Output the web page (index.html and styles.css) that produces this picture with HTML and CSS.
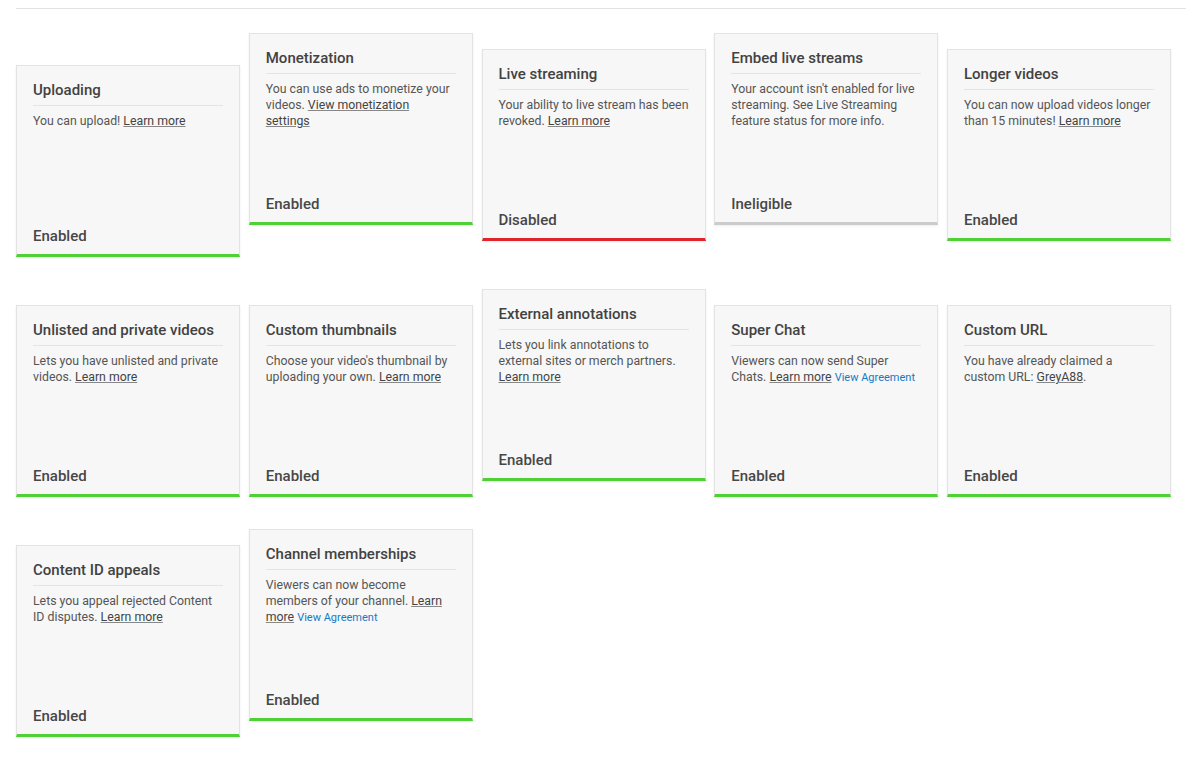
FILE: index.html
```html
<!DOCTYPE html>
<html lang="en">
<head>
<meta charset="utf-8">
<title>Channel features</title>
<link rel="stylesheet" href="styles.css">
</head>
<body>
<div class="page">
  <div class="rule"></div>
  <div class="features">
    <div class="card ok">
      <div class="title">Uploading</div>
      <div class="desc">You can upload! <a href="#">Learn more</a></div>
      <div class="status">Enabled</div>
    </div><div class="card ok">
      <div class="title">Monetization</div>
      <div class="desc">You can use ads to monetize your videos. <a href="#">View monetization settings</a></div>
      <div class="status">Enabled</div>
    </div><div class="card bad">
      <div class="title">Live streaming</div>
      <div class="desc">Your ability to live stream has been revoked. <a href="#">Learn more</a></div>
      <div class="status">Disabled</div>
    </div><div class="card na">
      <div class="title">Embed live streams</div>
      <div class="desc">Your account isn't enabled for live streaming. See Live Streaming feature status for more info.</div>
      <div class="status">Ineligible</div>
    </div><div class="card ok">
      <div class="title">Longer videos</div>
      <div class="desc">You can now upload videos longer than 15 minutes! <a href="#">Learn more</a></div>
      <div class="status">Enabled</div>
    </div><div class="card ok">
      <div class="title">Unlisted and private videos</div>
      <div class="desc">Lets you have unlisted and private videos. <a href="#">Learn more</a></div>
      <div class="status">Enabled</div>
    </div><div class="card ok">
      <div class="title">Custom thumbnails</div>
      <div class="desc">Choose your video's thumbnail by uploading your own. <a href="#">Learn more</a></div>
      <div class="status">Enabled</div>
    </div><div class="card ok">
      <div class="title">External annotations</div>
      <div class="desc">Lets you link annotations to external sites or merch partners. <a href="#">Learn more</a></div>
      <div class="status">Enabled</div>
    </div><div class="card ok">
      <div class="title">Super Chat</div>
      <div class="desc">Viewers can now send Super Chats. <a href="#">Learn more</a> <a class="agree" href="#">View Agreement</a></div>
      <div class="status">Enabled</div>
    </div><div class="card ok">
      <div class="title">Custom URL</div>
      <div class="desc">You have already claimed a custom URL: <a href="#">GreyA88</a>.</div>
      <div class="status">Enabled</div>
    </div><div class="card ok">
      <div class="title">Content ID appeals</div>
      <div class="desc">Lets you appeal rejected Content ID disputes. <a href="#">Learn more</a></div>
      <div class="status">Enabled</div>
    </div><div class="card ok">
      <div class="title">Channel memberships</div>
      <div class="desc">Viewers can now become members of your channel. <a href="#">Learn more</a> <a class="agree" href="#">View Agreement</a></div>
      <div class="status">Enabled</div>
    </div>
  </div>
</div>
</body>
</html>
```

FILE: styles.css
```css
html, body {
  margin: 0;
  padding: 0;
  background: #ffffff;
}

body {
  font-family: Roboto, "Liberation Sans", Arial, sans-serif;
  color: #333333;
}

.page {
  padding: 8px 14px 0 16px;
}

.rule {
  border-top: 1px solid #e2e2e2;
}

.features {
  padding-top: 8px;
  font-size: 0;
  line-height: 0;
}

.card {
  display: inline-block;
  vertical-align: baseline;
  position: relative;
  box-sizing: border-box;
  width: 224px;
  height: 192px;
  margin: 16px 8.75px 16px 0;
  padding: 15px 16px 0;
  background: #f7f7f7;
  border: 1px solid #e3e3e3;
  border-bottom: 3px solid #4fd136;
  box-shadow: 0 1px 2px rgba(0, 0, 0, 0.08);
  font-size: 12.3px;
  line-height: 16px;
  white-space: normal;
}

.card.bad {
  border-bottom-color: #e0242b;
}

.card.na {
  border-bottom-color: #cccccc;
}

.title {
  font-size: 15px;
  line-height: 18px;
  font-weight: 500;
  color: #424242;
  padding-bottom: 6px;
  border-bottom: 1px solid #e4e4e4;
  white-space: nowrap;
}

.desc {
  margin-top: 7px;
  color: #555555;
}

.desc a {
  color: #444444;
  text-decoration: underline;
  text-decoration-color: #888888;
  text-underline-offset: 1px;
}

.desc a.agree {
  color: #167ac6;
  font-size: 11px;
  text-decoration: none;
}

.status {
  position: absolute;
  left: 16px;
  bottom: 9px;
  font-size: 15px;
  line-height: 18px;
  font-weight: 500;
  color: #474747;
}
```
